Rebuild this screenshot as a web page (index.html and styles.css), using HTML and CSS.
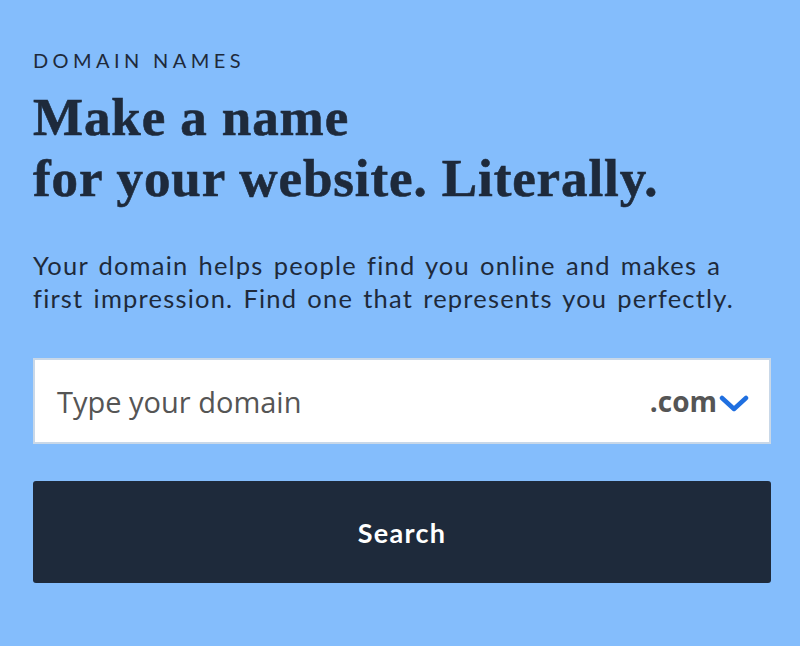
FILE: index.html
```html
<!DOCTYPE html>
<html lang="en">
<head>
<meta charset="utf-8">
<title>Domain names</title>
<link rel="stylesheet" href="styles.css">
</head>
<body>
<main class="hero">
  <p class="eyebrow">DOMAIN NAMES</p>
  <h1 class="title">Make a name<br>for your website. Literally.</h1>
  <p class="lead">Your domain helps people find you online and makes a first impression. Find one that represents you perfectly.</p>
  <form class="search">
    <div class="field">
      <span class="placeholder">Type your domain</span>
      <span class="tld">.com<svg class="chev" width="30" height="18" viewBox="0 0 30 18"><path d="M3 3 L15 14 L27 3" fill="none" stroke="#1f6fe0" stroke-width="4.5" stroke-linecap="round" stroke-linejoin="round"/></svg></span>
    </div>
    <button class="btn" type="button">Search</button>
  </form>
</main>
</body>
</html>
```
FILE: styles.css
```css
html, body {
  margin: 0;
  padding: 0;
  background: #84bdfc;
}
.hero {
  padding: 44px 29px 0 33px;
  color: #1e2a3b;
}
.eyebrow {
  margin: 0;
  font-family: "Lato", "Liberation Sans", sans-serif;
  font-size: 20px;
  letter-spacing: 4.4px;
  line-height: 32px;
  color: #1e2a3b;
}
.title {
  margin: 11px 0 0;
  font-family: "Liberation Serif", serif;
  font-weight: 700;
  font-size: 53px;
  line-height: 61px;
  letter-spacing: 0.9px;
  -webkit-text-stroke: 0.6px #1e2a3b;
}
.lead {
  margin: 40px 0 0;
  font-family: "Lato", "Liberation Sans", sans-serif;
  font-size: 25.5px;
  line-height: 33px;
  letter-spacing: 1.2px;
  word-spacing: 2.4px;
  color: #1e2a3b;
}
.search {
  margin-top: 43px;
  display: flex;
  flex-direction: column;
  gap: 37px;
}
.field {
  height: 82px;
  background: #fff;
  border: 2px solid #c9d8e8;
  display: flex;
  align-items: center;
  justify-content: space-between;
  padding: 0 20px 0 22px;
}
.placeholder {
  font-family: "Open Sans", sans-serif;
  font-size: 29px;
  color: #555;
}
.tld {
  display: flex;
  align-items: center;
  font-family: "Open Sans", sans-serif;
  font-weight: 700;
  font-size: 28px;
  color: #555;
}
.chev {
  margin-left: 2px;
  margin-top: 6px;
}
.btn {
  height: 102px;
  border: 0;
  border-radius: 3px;
  background: #1e2a3b;
  color: #fff;
  font-family: "Lato", "Liberation Sans", sans-serif;
  font-weight: 700;
  font-size: 27px;
  letter-spacing: 1.3px;
}
```
